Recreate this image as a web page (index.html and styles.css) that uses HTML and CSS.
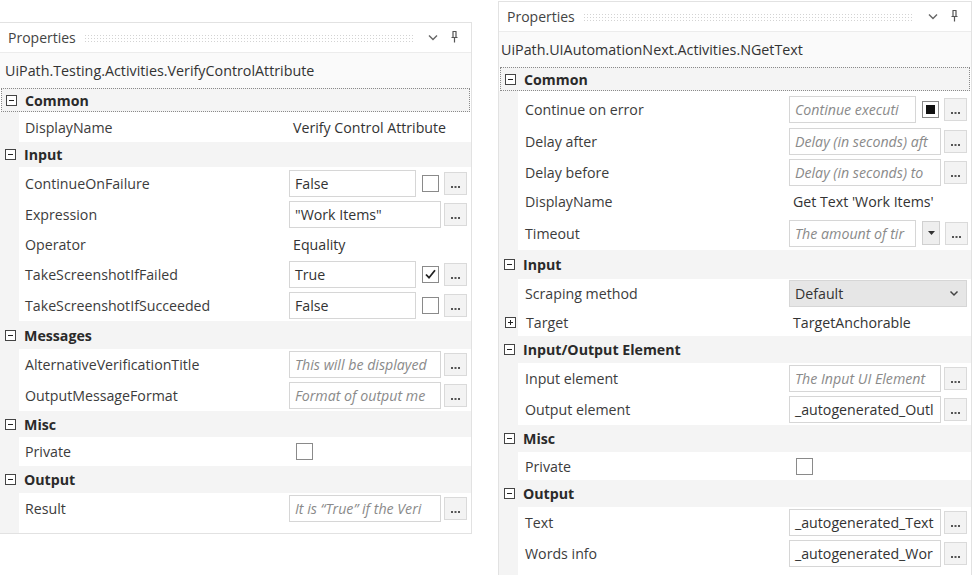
FILE: index.html
```html
<!DOCTYPE html>
<html>
<head>
<meta charset="utf-8">
<link rel="stylesheet" href="styles.css">
</head>
<body>
<div class="page">

  <div class="panel panel-left">
    <div class="titlebar">
      <span class="title">Properties</span>
      <span class="grip"></span>
      <svg class="chev" width="10" height="7" viewBox="0 0 10 7"><path d="M1 1.5l4 4 4-4" fill="none" stroke="#666" stroke-width="1.4"/></svg>
      <svg class="pin" width="9" height="13" viewBox="0 0 9 13"><path d="M2.5 1.5h4M3 1.5v6M6 1.5v6M1.5 7.5h6M4.5 7.5v5" fill="none" stroke="#555" stroke-width="1.2"/></svg>
    </div>
    <div class="typename">UiPath.Testing.Activities.VerifyControlAttribute</div>
    <div class="grid">
      <div class="cat focus h24"><svg class="tog" width="11" height="11" viewBox="0 0 11 11"><rect x=".5" y=".5" width="10" height="10" fill="#fff" stroke="#444"/><path d="M3 5.5h5" stroke="#222"/></svg>Common</div>
      <div class="prop h30"><span class="name">DisplayName</span><div class="val"><span class="plain">Verify Control Attribute</span></div></div>
      <div class="cat h25"><svg class="tog" width="11" height="11" viewBox="0 0 11 11"><rect x=".5" y=".5" width="10" height="10" fill="#fff" stroke="#444"/><path d="M3 5.5h5" stroke="#222"/></svg>Input</div>
      <div class="prop h32"><span class="name">ContinueOnFailure</span><div class="val"><span class="box short">False</span><span class="check"></span><span class="dots"><svg width="9" height="2" viewBox="0 0 9 2"><path d="M0 0h2v2H0zM3.5 0h2v2h-2zM7 0h2v2H7z" fill="#555"/></svg></span></div></div>
      <div class="prop h30"><span class="name">Expression</span><div class="val"><span class="box">"Work Items"</span><span class="dots"><svg width="9" height="2" viewBox="0 0 9 2"><path d="M0 0h2v2H0zM3.5 0h2v2h-2zM7 0h2v2H7z" fill="#555"/></svg></span></div></div>
      <div class="prop h30"><span class="name">Operator</span><div class="val"><span class="plain">Equality</span></div></div>
      <div class="prop h31"><span class="name">TakeScreenshotIfFailed</span><div class="val"><span class="box short">True</span><span class="check"><svg width="15" height="15" viewBox="0 0 15 15"><path d="M3 7.5l3 3.2 6-7.5" fill="none" stroke="#222" stroke-width="1.8"/></svg></span><span class="dots"><svg width="9" height="2" viewBox="0 0 9 2"><path d="M0 0h2v2H0zM3.5 0h2v2h-2zM7 0h2v2H7z" fill="#555"/></svg></span></div></div>
      <div class="prop h31"><span class="name">TakeScreenshotIfSucceeded</span><div class="val"><span class="box short">False</span><span class="check"></span><span class="dots"><svg width="9" height="2" viewBox="0 0 9 2"><path d="M0 0h2v2H0zM3.5 0h2v2h-2zM7 0h2v2H7z" fill="#555"/></svg></span></div></div>
      <div class="cat h28"><svg class="tog" width="11" height="11" viewBox="0 0 11 11"><rect x=".5" y=".5" width="10" height="10" fill="#fff" stroke="#444"/><path d="M3 5.5h5" stroke="#222"/></svg>Messages</div>
      <div class="prop h31"><span class="name">AlternativeVerificationTitle</span><div class="val"><span class="box ph">This will be displayed</span><span class="dots"><svg width="9" height="2" viewBox="0 0 9 2"><path d="M0 0h2v2H0zM3.5 0h2v2h-2zM7 0h2v2H7z" fill="#555"/></svg></span></div></div>
      <div class="prop h31"><span class="name">OutputMessageFormat</span><div class="val"><span class="box ph">Format of output me</span><span class="dots"><svg width="9" height="2" viewBox="0 0 9 2"><path d="M0 0h2v2H0zM3.5 0h2v2h-2zM7 0h2v2H7z" fill="#555"/></svg></span></div></div>
      <div class="cat h26"><svg class="tog" width="11" height="11" viewBox="0 0 11 11"><rect x=".5" y=".5" width="10" height="10" fill="#fff" stroke="#444"/><path d="M3 5.5h5" stroke="#222"/></svg>Misc</div>
      <div class="prop h29"><span class="name">Private</span><div class="val"><span class="check solo"></span></div></div>
      <div class="cat h27"><svg class="tog" width="11" height="11" viewBox="0 0 11 11"><rect x=".5" y=".5" width="10" height="10" fill="#fff" stroke="#444"/><path d="M3 5.5h5" stroke="#222"/></svg>Output</div>
      <div class="prop h31"><span class="name">Result</span><div class="val"><span class="box ph">It is “True” if the Veri</span><span class="dots"><svg width="9" height="2" viewBox="0 0 9 2"><path d="M0 0h2v2H0zM3.5 0h2v2h-2zM7 0h2v2H7z" fill="#555"/></svg></span></div></div>
      <div class="filler"></div>
    </div>
  </div>

  <div class="panel panel-right">
    <div class="titlebar">
      <span class="title">Properties</span>
      <span class="grip"></span>
      <svg class="chev" width="10" height="7" viewBox="0 0 10 7"><path d="M1 1.5l4 4 4-4" fill="none" stroke="#666" stroke-width="1.4"/></svg>
      <svg class="pin" width="9" height="13" viewBox="0 0 9 13"><path d="M2.5 1.5h4M3 1.5v6M6 1.5v6M1.5 7.5h6M4.5 7.5v5" fill="none" stroke="#555" stroke-width="1.2"/></svg>
    </div>
    <div class="typename">UiPath.UIAutomationNext.Activities.NGetText</div>
    <div class="grid">
      <div class="cat focus h24"><svg class="tog" width="11" height="11" viewBox="0 0 11 11"><rect x=".5" y=".5" width="10" height="10" fill="#fff" stroke="#444"/><path d="M3 5.5h5" stroke="#222"/></svg>Common</div>
      <div class="prop h34 lower"><span class="name">Continue on error</span><div class="val"><span class="box short ph">Continue executi</span><span class="check"><i class="fill"></i></span><span class="dots"><svg width="9" height="2" viewBox="0 0 9 2"><path d="M0 0h2v2H0zM3.5 0h2v2h-2zM7 0h2v2H7z" fill="#555"/></svg></span></div></div>
      <div class="prop h32"><span class="name">Delay after</span><div class="val"><span class="box ph">Delay (in seconds) aft</span><span class="dots"><svg width="9" height="2" viewBox="0 0 9 2"><path d="M0 0h2v2H0zM3.5 0h2v2h-2zM7 0h2v2H7z" fill="#555"/></svg></span></div></div>
      <div class="prop h30"><span class="name">Delay before</span><div class="val"><span class="box ph">Delay (in seconds) to</span><span class="dots"><svg width="9" height="2" viewBox="0 0 9 2"><path d="M0 0h2v2H0zM3.5 0h2v2h-2zM7 0h2v2H7z" fill="#555"/></svg></span></div></div>
      <div class="prop h29"><span class="name">DisplayName</span><div class="val"><span class="plain">Get Text 'Work Items'</span></div></div>
      <div class="prop h34"><span class="name">Timeout</span><div class="val"><span class="box short ph">The amount of tir</span><span class="drop"><svg width="7" height="4" viewBox="0 0 7 4"><path d="M0 0h7L3.5 4z" fill="#333"/></svg></span><span class="dots"><svg width="9" height="2" viewBox="0 0 9 2"><path d="M0 0h2v2H0zM3.5 0h2v2h-2zM7 0h2v2H7z" fill="#555"/></svg></span></div></div>
      <div class="cat h29"><svg class="tog" width="11" height="11" viewBox="0 0 11 11"><rect x=".5" y=".5" width="10" height="10" fill="#fff" stroke="#444"/><path d="M3 5.5h5" stroke="#222"/></svg>Input</div>
      <div class="prop h29"><span class="name">Scraping method</span><div class="val"><span class="select">Default<svg width="10" height="7" viewBox="0 0 10 7"><path d="M1.5 1.5l3.5 3.5 3.5-3.5" fill="none" stroke="#444" stroke-width="1.5"/></svg></span></div></div>
      <div class="prop sub h28"><span class="name"><svg class="tog" width="11" height="11" viewBox="0 0 11 11"><rect x=".5" y=".5" width="10" height="10" fill="#fff" stroke="#444"/><path d="M3 5.5h5M5.5 3v5" stroke="#222"/></svg>Target</span><div class="val"><span class="plain">TargetAnchorable</span></div></div>
      <div class="cat h27"><svg class="tog" width="11" height="11" viewBox="0 0 11 11"><rect x=".5" y=".5" width="10" height="10" fill="#fff" stroke="#444"/><path d="M3 5.5h5" stroke="#222"/></svg>Input/Output Element</div>
      <div class="prop h31"><span class="name">Input element</span><div class="val"><span class="box ph">The Input UI Element</span><span class="dots"><svg width="9" height="2" viewBox="0 0 9 2"><path d="M0 0h2v2H0zM3.5 0h2v2h-2zM7 0h2v2H7z" fill="#555"/></svg></span></div></div>
      <div class="prop h31"><span class="name">Output element</span><div class="val"><span class="box">_autogenerated_Outl</span><span class="dots"><svg width="9" height="2" viewBox="0 0 9 2"><path d="M0 0h2v2H0zM3.5 0h2v2h-2zM7 0h2v2H7z" fill="#555"/></svg></span></div></div>
      <div class="cat h27"><svg class="tog" width="11" height="11" viewBox="0 0 11 11"><rect x=".5" y=".5" width="10" height="10" fill="#fff" stroke="#444"/><path d="M3 5.5h5" stroke="#222"/></svg>Misc</div>
      <div class="prop h28"><span class="name">Private</span><div class="val"><span class="check solo"></span></div></div>
      <div class="cat h27"><svg class="tog" width="11" height="11" viewBox="0 0 11 11"><rect x=".5" y=".5" width="10" height="10" fill="#fff" stroke="#444"/><path d="M3 5.5h5" stroke="#222"/></svg>Output</div>
      <div class="prop h31"><span class="name">Text</span><div class="val"><span class="box">_autogenerated_Text</span><span class="dots"><svg width="9" height="2" viewBox="0 0 9 2"><path d="M0 0h2v2H0zM3.5 0h2v2h-2zM7 0h2v2H7z" fill="#555"/></svg></span></div></div>
      <div class="prop h31"><span class="name">Words info</span><div class="val"><span class="box">_autogenerated_Wor</span><span class="dots"><svg width="9" height="2" viewBox="0 0 9 2"><path d="M0 0h2v2H0zM3.5 0h2v2h-2zM7 0h2v2H7z" fill="#555"/></svg></span></div></div>
      <div class="filler"></div>
    </div>
  </div>

</div>
</body>
</html>
```

FILE: styles.css
```css
html, body {
  margin: 0;
  padding: 0;
  background: #fff;
}
body {
  font-family: "Open Sans", "Noto Sans", sans-serif;
  font-size: 14.2px;
  color: #3a3a3a;
  width: 974px;
  height: 575px;
  overflow: hidden;
}
.page {
  display: flex;
  align-items: flex-start;
  gap: 26px;
}
.panel {
  box-sizing: border-box;
  border: 1px solid #e2e2e2;
  background: #fff;
}
.panel-left {
  width: 473px;
  margin-left: -1px;
  margin-top: 22px;
}
.panel-right {
  width: 474px;
  margin-top: 1px;
}
.titlebar {
  height: 29px;
  display: flex;
  align-items: center;
  padding: 0 12px 0 8px;
  background: #fff;
}
.title {
  color: #444;
  font-size: 14px;
}
.grip {
  flex: 1;
  height: 8px;
  margin: 1px 14px 0 8px;
  background-image: radial-gradient(circle, #c8c8c8 0.8px, transparent 1px);
  background-size: 3px 3px;
  opacity: 0.8;
}
.chev { margin-right: 12px; }
.pin { margin-top: -2px; }
.typename {
  height: 35px;
  display: flex;
  align-items: center;
  padding-left: 2px;
  border-top: 1px solid #ececec;
  background: #fafafa;
  color: #333;
  font-size: 14.3px;
}
.panel-left .typename { padding-left: 5px; }
.grid {
  display: flex;
  flex-direction: column;
}
.cat {
  display: flex;
  align-items: center;
  background: #f4f4f4;
  font-weight: bold;
  color: #2a2a2a;
  padding-left: 5px;
  box-sizing: border-box;
}
.cat .tog { margin-right: 8px; }
.cat.focus {
  border: 1px dotted #8a8a8a;
  margin: 0 1px;
  padding-left: 4px;
}
.prop {
  display: flex;
  align-items: center;
  background: linear-gradient(to right, #f4f4f4 19px, #fff 19px);
}
.prop.lower { padding-top: 3px; box-sizing: border-box; }
.name {
  width: 264px;
  padding-left: 26px;
  box-sizing: content-box;
  flex: none;
  color: #3c3c3c;
  white-space: nowrap;
  display: flex;
  align-items: center;
}
.panel-left .name { width: 265px; padding-left: 25px; }
.prop.sub .name { padding-left: 6px; width: 284px; }
.prop.sub .tog { margin-right: 10px; }
.val {
  width: 178px;
  display: flex;
  align-items: center;
  flex: none;
}
.panel-left .val { margin-left: -1px; }
.plain {
  padding-left: 4px;
  white-space: nowrap;
  color: #333;
}
.box {
  box-sizing: border-box;
  width: 152px;
  height: 27px;
  border: 1px solid #d6d6d6;
  display: flex;
  align-items: center;
  padding: 0 5px;
  white-space: nowrap;
  overflow: hidden;
  color: #333;
  margin-right: 3px;
  flex: none;
}
.box.short { width: 127px; margin-right: 6px; }
.box.ph { font-style: italic; color: #8a8a8a; }
.check {
  box-sizing: border-box;
  width: 17px;
  height: 17px;
  border: 1px solid #8a8a8a;
  background: #fff;
  margin-right: 5px;
  display: flex;
  align-items: center;
  justify-content: center;
  flex: none;
}
.check.solo { margin-left: 7px; }
.check .fill {
  width: 9px;
  height: 9px;
  background: #111;
}
.drop {
  box-sizing: border-box;
  width: 18px;
  height: 24px;
  border: 1px solid #d0d0d0;
  background: #eeeeee;
  display: flex;
  align-items: center;
  justify-content: center;
  margin-right: 5px;
  flex: none;
}
.dots {
  box-sizing: border-box;
  width: 23px;
  height: 23px;
  border: 1px solid #dadada;
  background: #f3f3f3;
  display: flex;
  align-items: flex-end;
  justify-content: center;
  padding-bottom: 6px;
  flex: none;
}
.dots svg { display: block; }
.select {
  box-sizing: border-box;
  width: 178px;
  height: 27px;
  background: #e6e6e6;
  border: 1px solid #d6d6d6;
  display: flex;
  align-items: center;
  justify-content: space-between;
  padding: 0 7px 0 5px;
  color: #333;
}
.h24 { height: 24px; }
.h25 { height: 25px; }
.h26 { height: 26px; }
.h27 { height: 27px; }
.h28 { height: 28px; }
.h29 { height: 29px; }
.h30 { height: 30px; }
.h31 { height: 31px; }
.h32 { height: 32px; }
.h34 { height: 34px; }
.filler {
  height: 9px;
  background: linear-gradient(to right, #f4f4f4 19px, #fff 19px);
}
```
